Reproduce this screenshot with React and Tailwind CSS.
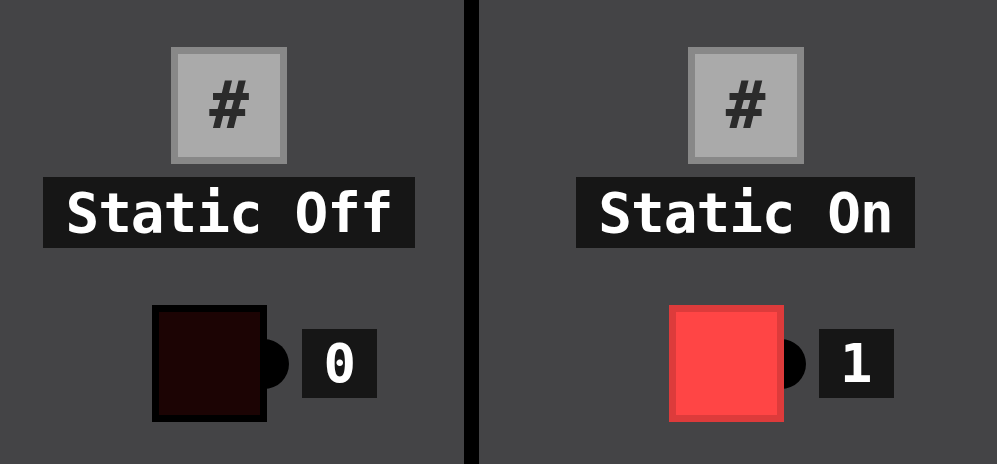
import React from 'react';

const mono = { fontFamily: '"DejaVu Sans Mono", "Liberation Mono", monospace' };

const Lamp = ({ label, on, colClass }) => (
  <div className={`flex flex-col items-center pt-[47px] ${colClass}`}>
    <div className="w-[116px] h-[117px] bg-[#aaaaaa] border-[7px] border-[#888888] flex items-center justify-center">
      <span className="text-[66px] font-bold text-[#2b2b2b] leading-none" style={mono}>#</span>
    </div>
    <div className="mt-[13px] h-[71px] px-[22px] bg-[#161616] flex items-center">
      <span className="text-[56px] font-bold text-white leading-none tracking-[-1px]" style={mono}>{label}</span>
    </div>
    <div className="mt-[57px] w-[296px] pl-[71px] flex items-center">
      <div className="relative w-[116px] h-[117px]">
        <div className="absolute right-[-22px] top-1/2 -translate-y-1/2 w-[50px] h-[50px] rounded-full bg-black" />
        <div
          className={`relative w-full h-full border-[7px] ${
            on ? 'bg-[#ff4545] border-[#dd3b3b]' : 'bg-[#1c0404] border-black'
          }`}
        />
      </div>
      <div className="ml-[35px] w-[75px] h-[69px] bg-[#161616] flex items-center justify-center">
        <span className="text-[54px] font-bold text-white leading-none" style={mono}>{on ? '1' : '0'}</span>
      </div>
    </div>
  </div>
);

const App = () => {
  return (
    <div className="w-[997px] h-[464px] flex bg-[#444446] overflow-hidden">
      <div className="w-[464px] h-full">
        <Lamp label="Static Off" on={false} colClass="w-[458px]" />
      </div>
      <div className="w-[15px] h-full bg-black" />
      <div className="flex-1 h-full pl-[21px]">
        <Lamp label="Static On" on={true} colClass="w-[491px]" />
      </div>
    </div>
  );
};

export default App;
